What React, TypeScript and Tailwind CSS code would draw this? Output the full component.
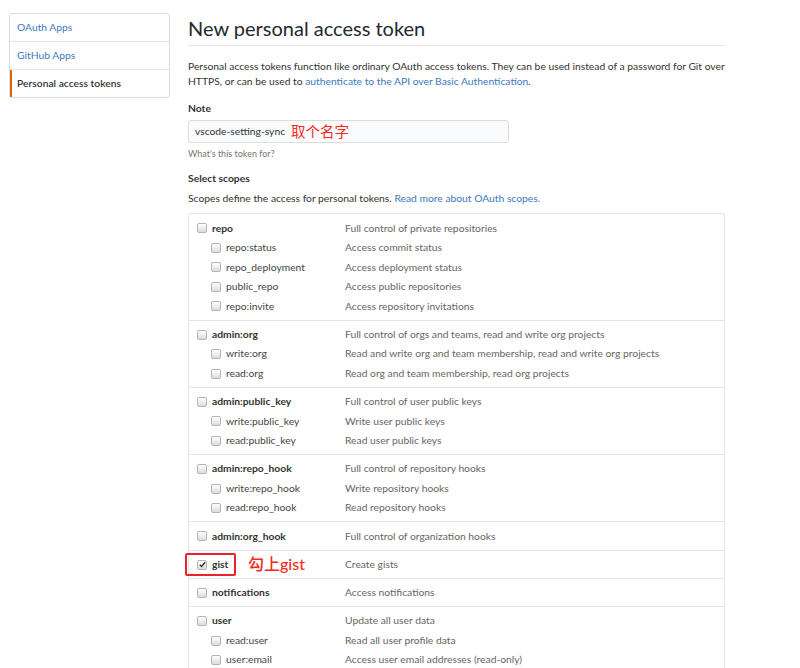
import React from "react";

type Scope = { name: string; desc: string; sub?: { name: string; desc: string }[]; checked?: boolean; mark?: boolean };

const scopes: Scope[] = [
  {
    name: "repo",
    desc: "Full control of private repositories",
    sub: [
      { name: "repo:status", desc: "Access commit status" },
      { name: "repo_deployment", desc: "Access deployment status" },
      { name: "public_repo", desc: "Access public repositories" },
      { name: "repo:invite", desc: "Access repository invitations" },
    ],
  },
  {
    name: "admin:org",
    desc: "Full control of orgs and teams, read and write org projects",
    sub: [
      { name: "write:org", desc: "Read and write org and team membership, read and write org projects" },
      { name: "read:org", desc: "Read org and team membership, read org projects" },
    ],
  },
  {
    name: "admin:public_key",
    desc: "Full control of user public keys",
    sub: [
      { name: "write:public_key", desc: "Write user public keys" },
      { name: "read:public_key", desc: "Read user public keys" },
    ],
  },
  {
    name: "admin:repo_hook",
    desc: "Full control of repository hooks",
    sub: [
      { name: "write:repo_hook", desc: "Write repository hooks" },
      { name: "read:repo_hook", desc: "Read repository hooks" },
    ],
  },
  { name: "admin:org_hook", desc: "Full control of organization hooks" },
  { name: "gist", desc: "Create gists", checked: true, mark: true },
  { name: "notifications", desc: "Access notifications" },
  {
    name: "user",
    desc: "Update all user data",
    sub: [
      { name: "read:user", desc: "Read all user profile data" },
      { name: "user:email", desc: "Access user email addresses (read-only)" },
    ],
  },
];

const Check = ({ checked }: { checked?: boolean }) => (
  <span className="flex h-[10px] w-[10px] shrink-0 items-center justify-center rounded-[2px] border border-[#b5b5b5] bg-gradient-to-b from-[#ffffff] to-[#dcdcdc]">
    {checked && (
      <svg viewBox="0 0 8 8" className="h-[7px] w-[7px]">
        <path d="M1 4.2 L3 6.2 L7 1.5" fill="none" stroke="#333" strokeWidth="1.6" />
      </svg>
    )}
  </span>
);

export default function App() {
  return (
    <div
      className="flex h-[668px] gap-[18px] overflow-hidden bg-white pl-[9px] pt-[13px] text-[#333]"
      style={{ fontFamily: "Lato, 'Noto Sans CJK SC', sans-serif" }}
    >
      <nav className="flex h-fit w-[161px] flex-col rounded-[3px] border border-[#dddddd] text-[10.3px]">
        <a className="flex h-[28px] items-center border-b border-[#e5e5e5] pl-[7px] pt-[1px] text-[#4078c0]">OAuth Apps</a>
        <a className="flex h-[28px] items-center border-b border-[#e5e5e5] pl-[7px] pt-[1px] text-[#4078c0]">GitHub Apps</a>
        <a className="flex h-[27px] items-center border-l-2 border-[#e36209] pl-[5px] font-semibold text-[#333]">Personal access tokens</a>
      </nav>

      <main className="flex w-[537px] flex-col">
        <h1 className="border-b border-[#e5e5e5] pb-[2px] text-[20px] leading-[30px] font-normal text-[#24292e]">New personal access token</h1>
        <p className="mt-[13px] whitespace-nowrap text-[10.3px] leading-[15px] text-[#333]">
          Personal access tokens function like ordinary OAuth access tokens. They can be used instead of a password for Git over
          <br />
          HTTPS, or can be used to <a className="text-[#4078c0]">authenticate to the API over Basic Authentication</a>.
        </p>

        <label className="mt-[11.5px] text-[10.3px] leading-[15px] font-bold">Note</label>
        <div className="mt-[4px] flex h-[24px] w-[321px] items-center rounded-[3px] border border-[#dddddd] bg-[#fafbfc] px-[6px] text-[10.3px]">
          <span>vscode-setting-sync</span>
          <span className="ml-[6px] text-[14.5px] text-[#f5291c]">取个名字</span>
        </div>
        <p className="mt-[4px] text-[9px] leading-[13px] text-[#767676]">What&apos;s this token for?</p>

        <h3 className="mt-[11px] text-[10.3px] leading-[15px] font-bold">Select scopes</h3>
        <p className="mt-[5px] text-[10.3px] leading-[15px]">
          Scopes define the access for personal tokens. <a className="text-[#4078c0]">Read more about OAuth scopes.</a>
        </p>

        <div className="mt-[7px] rounded-t-[3px] border border-b-0 border-[#e5e5e5] text-[10.3px]">
          {scopes.map((s, i) => (
            <div key={s.name} className={`pt-[4.25px] pb-[3.5px] ${i > 0 ? "border-t border-[#e5e5e5]" : ""}`}>
              <div className="relative flex h-[19.5px] items-center pl-[8px]">
                <div className="flex w-[148px] items-center gap-[5px]">
                  <Check checked={s.checked} />
                  <span className="font-bold text-[#333]">{s.name}</span>
                </div>
                <span className="text-[#666]">{s.desc}</span>
                {s.mark && (
                  <>
                    <span className="absolute left-[-4px] top-[-1.5px] h-[23px] w-[51px] rounded-[2px] border-2 border-[#e8232a]" />
                    <span className="absolute left-[59px] top-[-1px] text-[16px] leading-[20px] font-medium text-[#f5291c]">勾上gist</span>
                  </>
                )}
              </div>
              {s.sub?.map((c) => (
                <div key={c.name} className="flex h-[19.5px] items-center pl-[8px]">
                  <div className="flex w-[148px] items-center gap-[5px] pl-[14px]">
                    <Check />
                    <span className="text-[#444]">{c.name}</span>
                  </div>
                  <span className="text-[#666]">{c.desc}</span>
                </div>
              ))}
            </div>
          ))}
        </div>
      </main>
    </div>
  );
}
